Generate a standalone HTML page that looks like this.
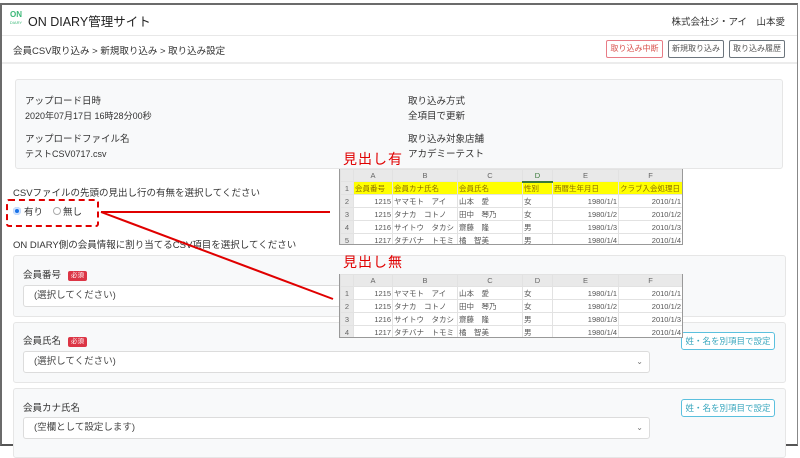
<!DOCTYPE html>
<html><head><meta charset="utf-8">
<style>
*{box-sizing:border-box;margin:0;padding:0}
body{width:800px;height:450px;background:#fff;font-family:"Liberation Sans","Noto Sans CJK JP",sans-serif;color:#333;position:relative;overflow:hidden;font-size:9.5px}
.abs{position:absolute;white-space:nowrap}
#frame{position:absolute;left:0;top:3px;width:798px;height:443px;border:2px solid #6b6b6b;border-right:1px solid #888;border-bottom:2px solid #555}
.btn{position:absolute;top:40px;height:18px;border:1px solid #6c757d;border-radius:2px;font-size:8px;color:#555;text-align:center;line-height:16px;white-space:nowrap}
.panel{position:absolute;background:#f8f9fa;border:1px solid #e6e6e6;border-radius:3px}
.sel{position:absolute;background:#fff;border:1px solid #dcdcdc;border-radius:3px;height:22px;font-size:9.5px;line-height:20px;padding-left:10px;color:#444}
.badge{display:inline-block;background:#dc3545;color:#fff;font-size:6.5px;border-radius:2px;padding:0 3px;line-height:10px;margin-left:7px;vertical-align:1px}
.ib{position:absolute;border:1px solid #5bc0de;border-radius:3px;color:#3aa7be;font-size:8.5px;height:18px;line-height:16px;text-align:center;background:#fff;white-space:nowrap}
table{border-collapse:collapse;font-size:7.5px;color:#555;background:#fff}
td{border:1px solid #e2e2e2;height:13px;padding:0 1px;white-space:nowrap;overflow:hidden}
.hd td{background:#e9e9e9;text-align:center;color:#666;height:12px}
td.r{text-align:center;background:#e9e9e9;color:#666}
.n{text-align:right}
.y td{background:#ffff00;color:#8a6d00}
.y td.r{background:#e9e9e9;color:#666}
.sheet{position:absolute;border:1px solid #999;border-top:none;overflow:hidden}
</style></head><body>
<div id="frame"></div>
<div class="abs" style="left:7px;top:11px;width:18px;font-size:8px;line-height:7px;color:#3cb878;text-align:center;font-weight:bold">ON<br><span style="font-size:4px;font-weight:normal">DIARY</span></div>
<div class="abs" style="left:28px;top:11px;font-size:12.5px;color:#222">ON DIARY管理サイト</div>
<div class="abs" style="right:15px;top:14px;font-size:9.5px;color:#333">株式会社ジ・アイ　山本愛</div>
<div class="abs" style="left:2px;top:35px;width:795px;height:1px;background:#e8e8e8"></div>
<div class="abs" style="left:13px;top:43px;font-size:9.5px;color:#333">会員CSV取り込み &gt; 新規取り込み &gt; 取り込み設定</div>
<div class="btn" style="left:606px;width:57px;border-color:#e87c86;color:#d9534f">取り込み中断</div>
<div class="btn" style="left:668px;width:56px">新規取り込み</div>
<div class="btn" style="left:729px;width:56px">取り込み履歴</div>
<div class="abs" style="left:2px;top:62px;width:795px;height:2px;background:#ececec"></div>
<div class="panel" style="left:15px;top:79px;width:768px;height:90px"></div>
<div class="abs" style="left:25px;top:94px;font-size:9.5px;line-height:15px">アップロード日時<br><span style="font-size:9px">2020年07月17日 16時28分00秒</span></div>
<div class="abs" style="left:25px;top:132px;font-size:9.5px;line-height:15px">アップロードファイル名<br><span style="font-size:9px">テストCSV0717.csv</span></div>
<div class="abs" style="left:408px;top:94px;font-size:9.5px;line-height:15px">取り込み方式<br>全項目で更新</div>
<div class="abs" style="left:408px;top:132px;font-size:9.5px;line-height:15px">取り込み対象店舗<br>アカデミーテスト</div>
<div class="abs" style="left:13px;top:185px;font-size:9.5px">CSVファイルの先頭の見出し行の有無を選択してください</div>
<div class="abs" style="left:13px;top:207px;width:8px;height:8px;border-radius:50%;background:#1a73e8;box-shadow:inset 0 0 0 2px #cfe2ff"></div>
<div class="abs" style="left:24px;top:204px;font-size:9.5px">有り</div>
<div class="abs" style="left:53px;top:207px;width:8px;height:8px;border-radius:50%;border:1px solid #aaa;background:#fff"></div>
<div class="abs" style="left:63px;top:204px;font-size:9.5px">無し</div>
<div class="abs" style="left:6px;top:199px;width:93px;height:28px;border:2px dashed #e00000;border-radius:3px"></div>
<div class="abs" style="left:13px;top:237px;font-size:9.5px">ON DIARY側の会員情報に割り当てるCSV項目を選択してください</div>
<div class="panel" style="left:13px;top:255px;width:773px;height:62px"></div>
<div class="abs" style="left:23px;top:267px;font-size:9.5px">会員番号<span class="badge">必須</span></div>
<div class="sel" style="left:23px;top:285px;width:630px">(選択してください)</div>
<div class="panel" style="left:13px;top:322px;width:773px;height:61px"></div>
<div class="abs" style="left:23px;top:333px;font-size:9.5px">会員氏名<span class="badge">必須</span></div>
<div class="sel" style="left:23px;top:351px;width:627px">(選択してください)<span style="position:absolute;right:6px;font-size:8px;color:#777">⌄</span></div>
<div class="ib" style="left:681px;top:332px;width:94px">姓・名を別項目で設定</div>
<div class="panel" style="left:13px;top:388px;width:773px;height:70px"></div>
<div class="abs" style="left:23px;top:400px;font-size:9.5px">会員カナ氏名</div>
<div class="sel" style="left:23px;top:417px;width:627px">(空欄として設定します)<span style="position:absolute;right:6px;font-size:8px;color:#777">⌄</span></div>
<div class="ib" style="left:681px;top:399px;width:94px">姓・名を別項目で設定</div>
<svg class="abs" style="left:0;top:0" width="800" height="450"><line x1="101" y1="212" x2="330" y2="212" stroke="#e00000" stroke-width="2"/><line x1="101" y1="212" x2="333" y2="299" stroke="#e00000" stroke-width="2"/></svg>
<div class="abs" style="left:343px;top:149px;font-size:14px;color:#e00000;letter-spacing:1px">見出し有</div>
<div class="sheet" style="left:339px;top:169px;width:344px;height:76px">
<table style="width:342px;table-layout:fixed">
<colgroup><col style="width:13px"><col style="width:39px"><col style="width:65px"><col style="width:65px"><col style="width:30px"><col style="width:66px"><col style="width:64px"></colgroup>
<tr class="hd"><td></td><td>A</td><td>B</td><td>C</td><td style="color:#3a7a3a;border-bottom:2px solid #3a7a3a">D</td><td>E</td><td>F</td></tr>
<tr class="y"><td class="r">1</td><td>会員番号</td><td>会員カナ氏名</td><td>会員氏名</td><td>性別</td><td>西暦生年月日</td><td>クラブ入会処理日</td></tr>
<tr><td class="r">2</td><td class="n">1215</td><td>ヤマモト　アイ</td><td>山本　愛</td><td>女</td><td class="n">1980/1/1</td><td class="n">2010/1/1</td></tr>
<tr><td class="r">3</td><td class="n">1215</td><td>タナカ　コトノ</td><td>田中　琴乃</td><td>女</td><td class="n">1980/1/2</td><td class="n">2010/1/2</td></tr>
<tr><td class="r">4</td><td class="n">1216</td><td>サイトウ　タカシ</td><td>齋藤　隆</td><td>男</td><td class="n">1980/1/3</td><td class="n">2010/1/3</td></tr>
<tr><td class="r">5</td><td class="n">1217</td><td>タチバナ　トモミ</td><td>橘　智美</td><td>男</td><td class="n">1980/1/4</td><td class="n">2010/1/4</td></tr>
</table></div>
<div class="abs" style="left:343px;top:252px;font-size:14px;color:#e00000;letter-spacing:1px">見出し無</div>
<div class="sheet" style="left:339px;top:274px;width:344px;height:64px">
<table style="width:342px;table-layout:fixed">
<colgroup><col style="width:13px"><col style="width:39px"><col style="width:65px"><col style="width:65px"><col style="width:30px"><col style="width:66px"><col style="width:64px"></colgroup>
<tr class="hd"><td></td><td>A</td><td>B</td><td>C</td><td>D</td><td>E</td><td>F</td></tr>
<tr><td class="r">1</td><td class="n">1215</td><td>ヤマモト　アイ</td><td>山本　愛</td><td>女</td><td class="n">1980/1/1</td><td class="n">2010/1/1</td></tr>
<tr><td class="r">2</td><td class="n">1215</td><td>タナカ　コトノ</td><td>田中　琴乃</td><td>女</td><td class="n">1980/1/2</td><td class="n">2010/1/2</td></tr>
<tr><td class="r">3</td><td class="n">1216</td><td>サイトウ　タカシ</td><td>齋藤　隆</td><td>男</td><td class="n">1980/1/3</td><td class="n">2010/1/3</td></tr>
<tr><td class="r">4</td><td class="n">1217</td><td>タチバナ　トモミ</td><td>橘　智美</td><td>男</td><td class="n">1980/1/4</td><td class="n">2010/1/4</td></tr>
</table></div>
</body></html>
